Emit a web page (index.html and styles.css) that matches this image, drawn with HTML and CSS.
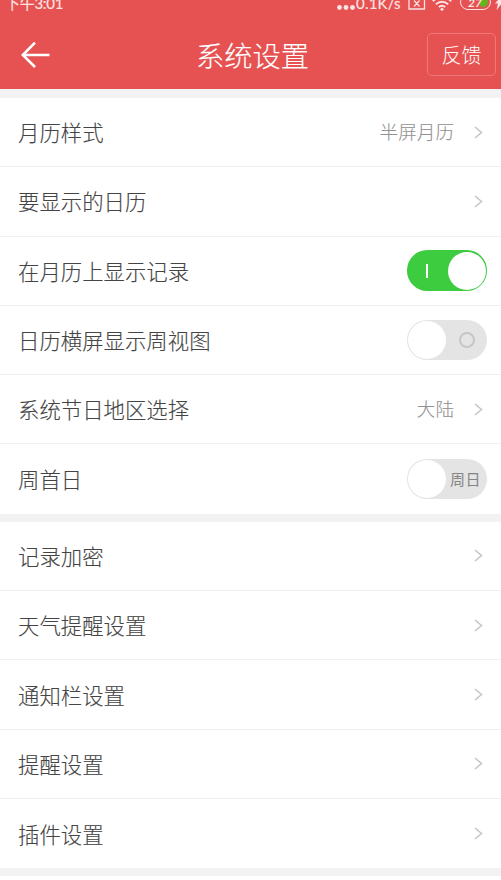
FILE: index.html
```
<!DOCTYPE html>
<html lang="zh-CN">
<head>
<meta charset="utf-8">
<title>系统设置</title>
<link rel="stylesheet" href="styles.css">
</head>
<body>
<svg class="defs" width="0" height="0"><symbol id="chevron" viewBox="0 0 9 13"><path d="M1 1 7.5 6.5 1 12" fill="none" stroke="#c4c4c4" stroke-width="1.5"/></symbol></svg>
<div class="screen">
  <header class="header">
    <div class="status">
      <span class="time">下午3:01</span>
      <div class="indicators">
        <svg class="dots" width="18" height="5" viewBox="0 0 18 5" fill="#fbe4e4"><circle cx="2.5" cy="2.5" r="2.4"/><circle cx="9" cy="2.5" r="2.4"/><circle cx="15.500" cy="2.5" r="2.4"/></svg>
        <span class="speed">0.1K/s</span>
        <svg class="sim" width="18" height="16" viewBox="0 0 18 16" fill="none" stroke="#fbe4e4" stroke-width="1.3"><path d="M1 0V15H16.500V0M6 6.500l5.500 6M11.500 6.500l-5.500 6"/></svg>
        <svg class="wifi" width="20" height="16" viewBox="0 0 20 16" fill="none" stroke="#fbe4e4" stroke-width="1.800"><path d="M.8 6.200Q10-1.800 19.200 6.200M3.800 9.200Q10 4.200 16.200 9.200M6.800 12Q10 9.400 13.200 12"/><circle cx="10" cy="14.200" r="1.500" fill="#fbe4e4" stroke="none"/></svg>
        <div class="battery"><i class="charge"></i><span class="percent">27</span></div>
        <svg class="bolt" width="6" height="16" viewBox="0 0 6 16"><path d="M5.500 2 0 8.500H3L1.500 15 6 9.500V2Z" fill="#fbe4e4"/></svg>
      </div>
    </div>
    <div class="navbar">
      <svg class="back" width="30" height="27" viewBox="0 0 30 27" fill="none" stroke="#fff" stroke-width="2.600"><path d="M14 1.700 1.800 14 14 26M1.800 14H28.500"/></svg>
      <h1 class="title">系统设置</h1>
      <div class="feedback">反馈</div>
    </div>
  </header>
  <main>
    <section class="group">
      <div class="row"><span class="label">月历样式</span><span class="value">半屏月历</span><svg class="chevron"><use href="#chevron"/></svg></div>
      <div class="row"><span class="label">要显示的日历</span><svg class="chevron"><use href="#chevron"/></svg></div>
      <div class="row"><span class="label">在月历上显示记录</span><div class="toggle on"><i class="bar"></i><i class="knob"></i></div></div>
      <div class="row"><span class="label">日历横屏显示周视图</span><div class="toggle"><i class="knob"></i><i class="ring"></i></div></div>
      <div class="row"><span class="label">系统节日地区选择</span><span class="value">大陆</span><svg class="chevron"><use href="#chevron"/></svg></div>
      <div class="row"><span class="label">周首日</span><div class="toggle"><i class="knob"></i><span class="day">周日</span></div></div>
    </section>
    <section class="group">
      <div class="row"><span class="label">记录加密</span><svg class="chevron"><use href="#chevron"/></svg></div>
      <div class="row"><span class="label">天气提醒设置</span><svg class="chevron"><use href="#chevron"/></svg></div>
      <div class="row"><span class="label">通知栏设置</span><svg class="chevron"><use href="#chevron"/></svg></div>
      <div class="row"><span class="label">提醒设置</span><svg class="chevron"><use href="#chevron"/></svg></div>
      <div class="row"><span class="label">插件设置</span><svg class="chevron"><use href="#chevron"/></svg></div>
    </section>
    <section class="group next"></section>
  </main>
</div>
</body>
</html>
```
FILE: styles.css
```
* { box-sizing: border-box; }
body { margin: 0; background: #f2f2f2; font-family: "Noto Sans CJK SC", sans-serif; font-weight: 300; }
.defs { display: block; height: 0; }
.screen { width: 501px; height: 880px; overflow: hidden; }
.header { height: 89px; background: #e65252; color: #fff; overflow: hidden; }
.status { height: 21px; display: flex; justify-content: space-between; padding-left: 5px; color: #fbe4e4; }
.time { font: 400 15px/20px Lato, "Noto Sans CJK SC", sans-serif; letter-spacing: -.3px; margin-top: -7px; -webkit-text-stroke: .15px #fbe4e4; }
.indicators { display: flex; align-items: flex-start; }
.dots { margin-top: 5px; }
.speed { font: 400 15px/20px Lato, sans-serif; letter-spacing: .2px; margin: -7px 0 0 1px; width: 52px; white-space: nowrap; -webkit-text-stroke: .15px #fbe4e4; }
.sim { margin-top: -6px; }
.wifi { margin: -5px 0 0 6px; }
.battery { position: relative; width: 31px; height: 16px; margin: -6px 0 0 8px; border: 1.500px solid #fbe4e4; border-radius: 8px; overflow: hidden; }
.charge { position: absolute; right: 2px; top: 2px; width: 8px; height: 10px; border-radius: 3px 6px 6px 3px; background: #61b51f; }
.percent { position: absolute; left: 7px; top: 1px; font: italic 700 12px/14px Lato, sans-serif; }
.bolt { margin: -5px 0 0 4px; }
.navbar { height: 67px; display: grid; grid-template-columns: 100px 1fr 100px; align-items: center; }
.back { margin-left: 21px; }
.title { margin: 1px 0 0; text-align: center; font-size: 28.300px; line-height: 40px; font-weight: 300; padding-left: 4px; -webkit-text-stroke: .12px #fff; }
.feedback { justify-self: end; width: 69px; height: 43px; margin-right: 5px; border: 1px solid #ee7878; border-radius: 5px; font-size: 20px; line-height: 42px; text-align: center; }
.group { margin-top: 9px; background: #fff; }
.group + .group { margin-top: 8px; }
.next { height: 10px; }
.row { height: 69.300px; display: flex; align-items: center; padding: 0 14px 0 18px; border-bottom: 1px solid #f0f0f0; }
.row:last-child { border-bottom: 0; }
.label { flex: 1; font-size: 21.400px; line-height: 30px; color: #444; -webkit-text-stroke: .12px #444; }
.value { font-size: 18.600px; line-height: 28px; margin-top: -2px; color: #929292; margin-right: 20px; -webkit-text-stroke: .1px #929292; }
.chevron { width: 9px; height: 13px; margin-right: 4px; }
.toggle { width: 80px; height: 40.500px; border-radius: 20.250px; background: #e4e4e4; padding: 1px; display: flex; align-items: center; }
.knob { width: 38px; height: 38px; border-radius: 50%; background: #fff; }
.on { background: #3dcc40; }
.bar { width: 2px; height: 14px; background: #fff; margin: 0 20px 0 18px; }
.ring { width: 16px; height: 16px; margin-left: 13px; border: 2px solid #c6c6c6; border-radius: 50%; }
.day { font-size: 15px; line-height: 22px; font-weight: 400; color: #858585; margin: -1px 0 0 4px; letter-spacing: .5px; white-space: nowrap; }
```
